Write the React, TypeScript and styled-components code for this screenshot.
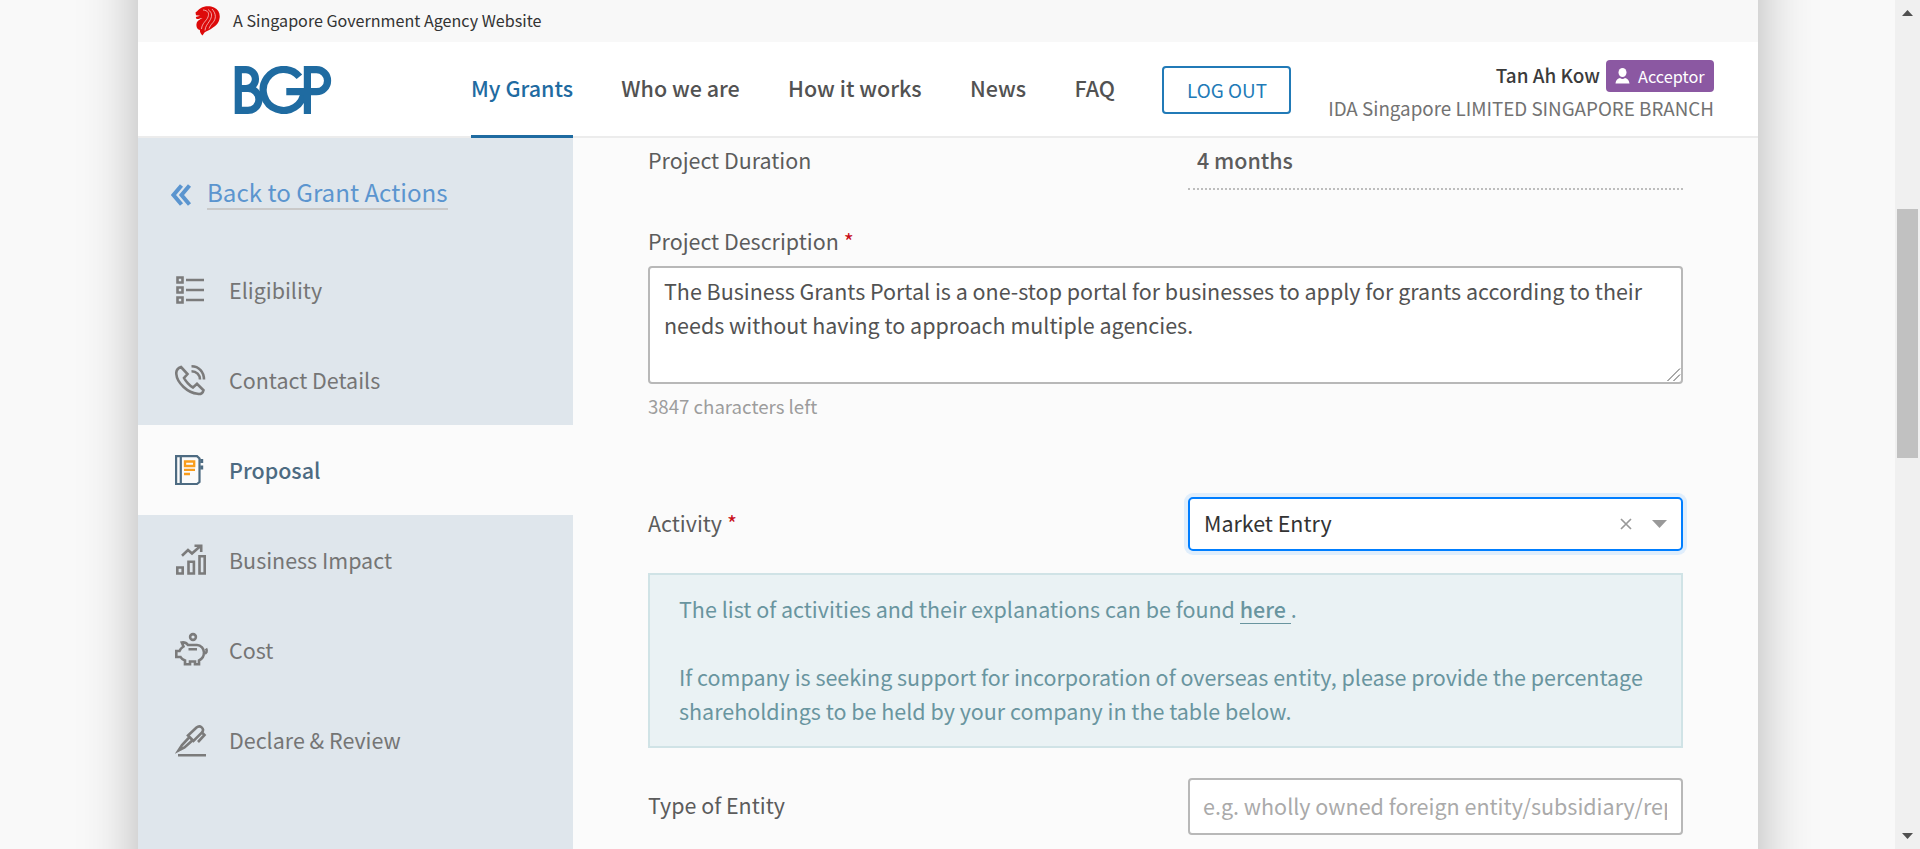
import React from "react";
import styled, { createGlobalStyle, css } from "styled-components";

const sans = `"Noto Sans CJK SC", "Noto Sans", sans-serif`;

const GlobalStyle = createGlobalStyle`
  * { box-sizing: border-box; }
  body { margin: 0; background: #f9f9f9; overflow: hidden; font-family: ${sans}; }
  input, textarea, button { font-family: ${sans}; }
`;

const Screen = styled.div`
  display: flex;
  width: 1920px;
  height: 849px;
  overflow: hidden;
`;

const Viewport = styled.div`
  flex: 1;
  padding-left: 138px;
  overflow: hidden;
`;

const Sheet = styled.div`
  display: flex;
  flex-direction: column;
  width: 1620px;
  height: 1049px;
  margin-top: -100px;
  padding-top: 100px;
  background: #fbfbfb;
  box-shadow: 0 0 54px rgba(0, 0, 0, 0.28);
`;

const GovStrip = styled.div`
  display: flex;
  align-items: center;
  gap: 12px;
  height: 42px;
  padding: 0 0 1px 57px;
  background: #f8f8f8;
  color: #333;
  font-size: 16.12px;
  line-height: 24px;
`;

const StripText = styled.span`
  padding-bottom: 2px;
`;

const Header = styled.header`
  display: flex;
  height: 96px;
  padding: 0 44px 0 96px;
  background: #fff;
  border-bottom: 2px solid #ececec;
`;

const LogoLink = styled.a`
  display: block;
  width: 98px;
  height: 48px;
  margin: 24px 139px 0 0;
`;

const Nav = styled.nav`
  display: flex;
  gap: 48.3px;
`;

const NavItem = styled.a<{ $active?: boolean }>`
  height: 96px;
  padding-top: 29px;
  line-height: 34px;
  font-size: 21.5px;
  font-weight: 500;
  white-space: nowrap;
  color: ${(p) => (p.$active ? "#1f6ba1" : "#525252")};
  border-bottom: 3px solid ${(p) => (p.$active ? "#1f6ba1" : "transparent")};
`;

const LogOut = styled.button`
  width: 129px;
  height: 48px;
  margin: 24px 0 0 47.5px;
  padding: 0 0 2px;
  border: 2px solid #217ab7;
  border-radius: 4px;
  background: #fff;
  color: #217ab7;
  font-size: 18.9px;
`;

const Account = styled.div`
  display: flex;
  flex-direction: column;
  align-items: flex-end;
  margin-left: auto;
  padding-top: 18px;
  white-space: nowrap;
`;

const AccountLine = styled.div`
  display: flex;
  align-items: center;
  gap: 6px;
  height: 32px;
  color: #3b3b3b;
`;

const UserName = styled.span`
  padding-bottom: 3px;
  font-size: 18.9px;
  font-weight: 500;
`;

const RoleBadge = styled.span`
  display: flex;
  align-items: center;
  gap: 8px;
  width: 108px;
  height: 32px;
  padding: 0 0 1px 9px;
  border-radius: 4px;
  background: #8b58a2;
  color: #fff;
  font-size: 16.3px;
`;

const Company = styled.div`
  height: 32px;
  line-height: 32px;
  font-size: 18.81px;
  color: #727272;
`;

const Body = styled.div`
  display: flex;
  flex: 1;
`;

const Sidebar = styled.aside`
  width: 435px;
  background: #dfe6ec;
`;

const BackLink = styled.a`
  display: flex;
  gap: 14px;
  height: 107px;
  padding: 36px 0 0 33px;
  color: #5b95cf;

  svg { margin-top: 10px; }
`;

const BackText = styled.span`
  height: 36px;
  line-height: 36px;
  margin-left: 1px;
  font-size: 24.15px;
  white-space: nowrap;
  border-bottom: 2px solid #c9c9c9;
`;

const SideItem = styled.a<{ $active?: boolean }>`
  display: flex;
  align-items: center;
  height: 90px;
  padding-left: 37px;
  gap: 18px;
  font-size: 21.48px;
  white-space: nowrap;
  color: #757575;
  ${(p) =>
    p.$active &&
    css`
      background: #fbfbfb;
      color: #4d6b82;
      font-weight: 500;
    `}
`;

const SideText = styled.span`
  padding-bottom: 2px;
`;

const SideIcon = styled.svg`
  width: 36px;
  height: 36px;
  flex: none;
  fill: none;
  stroke: #7b7b7b;
  stroke-width: 2.6;
`;

const Form = styled.main`
  width: 1035px;
  margin-left: 75px;
  color: #5c5c5c;
  font-size: 21.45px;
`;

const FieldRow = styled.div<{ $height: number; $top?: number }>`
  display: flex;
  align-items: center;
  justify-content: space-between;
  height: ${(p) => p.$height}px;
  margin-top: ${(p) => p.$top ?? 0}px;
`;

const Label = styled.label`
  display: block;
  padding-bottom: 3px;
  line-height: 34px;
  white-space: nowrap;
`;

const Required = styled.span`
  margin-left: 5px;
  color: #c9101a;
`;

const ReadOnly = styled.div`
  width: 495px;
  height: 52px;
  padding: 5px 9px 0;
  line-height: 34px;
  font-weight: 500;
  border-bottom: 2px dotted #bdbdbd;
`;

const TopAlignedLabel = styled(Label)`
  align-self: flex-start;
  padding-top: 5px;
`;

const DescriptionLabel = styled(Label)`
  margin-top: 34px;
  height: 42px;
`;

const TextAreaWrap = styled.div`
  position: relative;
  height: 118px;
`;

const TextArea = styled.textarea`
  display: block;
  width: 1035px;
  height: 118px;
  padding: 6px 14px;
  border: 2px solid #b8b8b8;
  border-radius: 4px;
  background: #fff;
  color: #525252;
  font-size: 21.48px;
  line-height: 34px;
  outline: none;
  overflow: hidden;
  resize: none;
`;

const ResizeGrip = styled.svg`
  position: absolute;
  right: 2px;
  bottom: 2px;
  width: 14px;
  height: 14px;
`;

const Hint = styled.div`
  height: 30px;
  margin-top: 7px;
  line-height: 30px;
  font-size: 18.65px;
  color: #9d9d9d;
`;

const Select = styled.div`
  display: flex;
  align-items: center;
  width: 495px;
  height: 54px;
  padding: 0 14px;
  border: 2px solid #007eff;
  border-radius: 5px;
  background: #fff;
  color: #333;
  box-shadow: 0 0 0 4px #e0eefc;
`;

const SelectValue = styled.span`
  flex: 1;
  padding-bottom: 2px;
  line-height: 34px;
`;

const InfoBox = styled.div`
  height: 175px;
  margin-top: 22px;
  padding: 17px 29px;
  border: 2px solid #d0e3e6;
  background: #eaf2f4;
  color: #69959f;
  font-size: 21.49px;
  line-height: 34px;
  white-space: nowrap;
`;

const Paragraph = styled.p`
  margin: 0 0 34px;
`;

const InlineLink = styled.a`
  display: inline-block;
  height: 32px;
  font-weight: 500;
  white-space: pre;
  vertical-align: top;
  border-bottom: 1px solid #69959f;
`;

const TextInput = styled.input`
  width: 495px;
  height: 57px;
  padding: 0 14px 2px 13px;
  border: 2px solid #b8b8b8;
  border-radius: 4px;
  background: #fff;
  font-size: 21.5px;
  outline: none;
  &::placeholder { color: #aaa; }
`;

const ScrollTrack = styled.div`
  display: flex;
  flex-direction: column;
  justify-content: space-between;
  align-items: center;
  width: 25px;
  padding: 10px 0;
  background: #f0f0f0;
`;

const ScrollThumb = styled.div`
  width: 21px;
  height: 249px;
  margin: 193px 0 auto;
  background: #c1c1c1;
`;

const Lion = () => (
  <svg width="26" height="30" viewBox="0 0 26 30">
    <path d="M0.500 6.500 C3 4.500 3.500 3.500 6 2 C9 0 15 -0.500 19 1.500 C23.500 3.500 25.500 8 24.500 12.500 C24 17 21 19.500 18 21.500 C15 24 11 25 9.500 26.500 L7.500 29.500 C6 28 4.500 26 5 24 C2.500 23.500 1 21 1.500 18 C2 14.500 5 13.500 7.500 12 C6 11.500 4 13.500 1.500 13 L0.800 11 L5 9.700 L1 9.200 Z" fill="#dd0a0a" />
    <path d="M8 4 C13 4.500 14.500 7 13 11 C11.500 15 7 17 6.500 23 M13 3.500 C18 7 17 11 14.500 15 C12 19 10.500 20 10 24.500 M17 3 C21.500 8 21 13 18 16.500 C15.500 19 15 20.500 14 22.500" fill="none" stroke="#fbe3e3" strokeWidth="0.7" />
  </svg>
);

const BgpLogo = () => (
  <svg width="98" height="48" viewBox="0 0 98 48" fill="none" stroke="#1f6ba1" strokeWidth="7.2">
    <path d="M4.300 3.600 H12 A9.450 9.450 0 0 1 12 22.500 H4.300 M12 22.500 H14 A10.950 10.950 0 0 1 14 44.400 H4.300 M4.300 0 V48" />
    <path d="M65.400 10.800 A20.500 20.500 0 1 0 70.100 25.700" />
    <path d="M73.400 48 V0 M73 3.600 H82.500 A11.050 11.050 0 0 1 82.500 25.700 H52.300" />
  </svg>
);

const icons = {
  list: (
    <SideIcon viewBox="0 0 36 36">
      <path d="M2.500 5.500h5v5h-5z M2.500 15.500h5v5h-5z M2.500 25.500h5v5h-5z M11 8h18 M11 18h18 M11 28h18" />
    </SideIcon>
  ),
  phone: (
    <SideIcon viewBox="0 0 36 36">
      <path d="M6 5 L12.500 12 L9 16 C10.500 19 15 24 18 25.500 L22 21.800 L28.500 28.300 C28 31 26 32.500 22.500 31.800 C13 31 2 21 1.300 12 C1 8.500 3 6 6 5 Z M16.500 9.200 C21.500 9.200 25 13 25 17.500 M16.500 4.200 C24 4.200 29 10 29 17.500" />
    </SideIcon>
  ),
  book: (
    <SideIcon viewBox="0 0 36 36">
      <path stroke="#4d6b82" strokeWidth="2.200" d="M1.100 4.100 H22 L24.500 6.500 V30 L22 32 H1.100 Z M5.800 4 V32" />
      <path stroke="#4d6b82" strokeWidth="3" d="M26.700 7v4 M26.700 13.500v4" />
      <path stroke="#f99d1c" strokeWidth="2.300" d="M10 9.500h9.200v4.500h-9.200z M9 17.800h11 M9 22h6" />
    </SideIcon>
  ),
  chart: (
    <SideIcon viewBox="0 0 36 36">
      <path d="M2.300 25.500h5.400v6h-5.400z M13.500 19.700h5.400v11.800h-5.400z M24.500 14.200h5.200v17.300h-5.200z M7 13.700 L13 8 L17 11.500 L26 3.500 M19.500 3.700 H26.200 V10" />
    </SideIcon>
  ),
  pig: (
    <SideIcon viewBox="0 0 36 36">
      <circle cx="18" cy="5" r="2.900" />
      <path d="M13 13 H22 C26 13 29 17 29 20.500 C29 24.500 27 27 24 28.500 V32.200 H20 V29.500 H15 V32.200 H10 V28.500 C7.500 27.500 6.500 27 5.500 25 H1.300 V19 H4.500 C5.500 16.500 7 15.500 8.500 14.500 L6.800 10.500 C10 10 11.500 11 13 13 Z M13.500 17.300 H22 M29 21.500 C31.500 21.500 32.500 19 31 16.500" />
    </SideIcon>
  ),
  pen: (
    <SideIcon viewBox="0 0 36 36">
      <path d="M3 33.200 H31 M3.500 28.500 L7 23 L14.500 15 L17.500 18.300 L9.500 25.500 Z M13 13.500 L21.500 5.500 C25 2.500 30 6.500 27 10.500 L18.500 19 Z M23 20 L29.500 13 L27 10.500" />
    </SideIcon>
  ),
};

const sideItems: { icon: keyof typeof icons; text: string }[] = [
  { icon: "list", text: "Eligibility" },
  { icon: "phone", text: "Contact Details" },
  { icon: "book", text: "Proposal" },
  { icon: "chart", text: "Business Impact" },
  { icon: "pig", text: "Cost" },
  { icon: "pen", text: "Declare & Review" },
];

export default function App() {
  return (
    <>
      <GlobalStyle />
      <Screen>
        <Viewport>
          <Sheet>
            <GovStrip>
              <Lion />
              <StripText>A Singapore Government Agency Website</StripText>
            </GovStrip>
            <Header>
              <LogoLink aria-label="BGP"><BgpLogo /></LogoLink>
              <Nav>
                {["My Grants", "Who we are", "How it works", "News", "FAQ"].map((t, i) => (
                  <NavItem key={t} $active={i === 0}>{t}</NavItem>
                ))}
              </Nav>
              <LogOut>LOG OUT</LogOut>
              <Account>
                <AccountLine>
                  <UserName>Tan Ah Kow</UserName>
                  <RoleBadge>
                    <svg width="15" height="16" viewBox="0 0 15 16" fill="#fff">
                      <ellipse cx="7.500" cy="4.500" rx="4" ry="4.500" />
                      <path d="M0.500 15.500 C1 11.500 3 10.500 5 10 Q7.500 12 10 10 C12 10.500 14 11.500 14.500 15.500 Z" />
                    </svg>
                    Acceptor
                  </RoleBadge>
                </AccountLine>
                <Company>IDA Singapore LIMITED SINGAPORE BRANCH</Company>
              </Account>
            </Header>
            <Body>
              <Sidebar>
                <BackLink>
                  <svg width="21" height="22" viewBox="0 0 21 22" fill="none" stroke="#5b95cf" strokeWidth="4">
                    <path d="M10.500 1.500 L2.500 11 L10.500 20.500 M18.500 1.500 L10.500 11 L18.500 20.500" />
                  </svg>
                  <BackText>Back to Grant Actions</BackText>
                </BackLink>
                {sideItems.map((s) => (
                  <SideItem key={s.text} $active={s.icon === "book"}>
                    {icons[s.icon]}
                    <SideText>{s.text}</SideText>
                  </SideItem>
                ))}
              </Sidebar>
              <Form>
                <FieldRow $height={52}>
                  <TopAlignedLabel>Project Duration</TopAlignedLabel>
                  <ReadOnly>4 months</ReadOnly>
                </FieldRow>
                <DescriptionLabel>Project Description<Required>*</Required></DescriptionLabel>
                <TextAreaWrap>
                  <TextArea defaultValue="The Business Grants Portal is a one-stop portal for businesses to apply for grants according to their needs without having to approach multiple agencies." />
                  <ResizeGrip viewBox="0 0 14 14" fill="none" stroke="#555" strokeWidth="1">
                    <path d="M0.500 13 L13 0.500 M6.500 13 L13 6.500" />
                  </ResizeGrip>
                </TextAreaWrap>
                <Hint>3847 characters left</Hint>
                <FieldRow $height={54} $top={76}>
                  <Label>Activity<Required>*</Required></Label>
                  <Select>
                    <SelectValue>Market Entry</SelectValue>
                    <svg width="47" height="12" viewBox="0 0 47 12">
                      <path d="M1 1 L11 11 M11 1 L1 11" stroke="#999" strokeWidth="1.700" />
                      <path d="M32 2 H47 L39.500 10 Z" fill="#999" />
                    </svg>
                  </Select>
                </FieldRow>
                <InfoBox>
                  <Paragraph>
                    The list of activities and their explanations can be found <InlineLink>here </InlineLink>.
                  </Paragraph>
                  <Paragraph>
                    If company is seeking support for incorporation of overseas entity, please provide the percentage
                    <br />
                    shareholdings to be held by your company in the table below.
                  </Paragraph>
                </InfoBox>
                <FieldRow $height={57} $top={30}>
                  <Label>Type of Entity</Label>
                  <TextInput placeholder="e.g. wholly owned foreign entity/subsidiary/rep office" />
                </FieldRow>
              </Form>
            </Body>
          </Sheet>
        </Viewport>
        <ScrollTrack>
          <svg width="11" height="6" viewBox="0 0 11 6" fill="#505050"><path d="M0 6 L5.500 0 L11 6 Z" /></svg>
          <ScrollThumb />
          <svg width="11" height="6" viewBox="0 0 11 6" fill="#505050"><path d="M0 0 L5.500 6 L11 0 Z" /></svg>
        </ScrollTrack>
      </Screen>
    </>
  );
}
